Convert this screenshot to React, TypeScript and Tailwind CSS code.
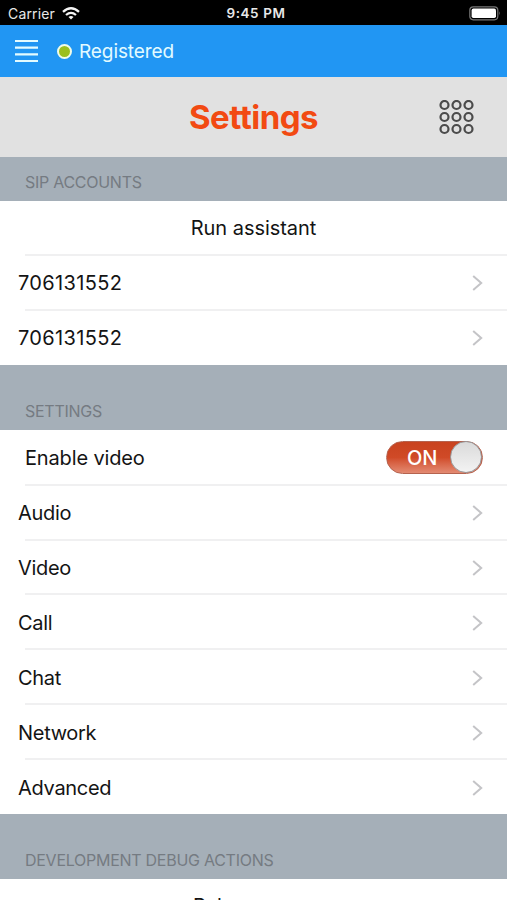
import React, { useState } from 'react';

const ACCOUNTS = ['706131552', '706131552'];
const PAGES = ['Audio', 'Video', 'Call', 'Chat', 'Network', 'Advanced'];

const Chevron: React.FC = () => (
  <svg className="w-[11px] h-4 shrink-0" viewBox="0 0 11 16" fill="none" stroke="#c4c4c7" strokeWidth="2">
    <path d="M1.2 1 L9.2 8 L1.2 15" />
  </svg>
);

const SectionTitle: React.FC<{ title: string; className?: string }> = ({ title, className = 'h-[65px]' }) => (
  <div className={`${className} shrink-0 flex items-end bg-[#a5afb8] pl-[25px] pb-[9px]`}>
    <h2 className="text-[16px] leading-5 tracking-[-0.27px] text-[#757b82]">{title}</h2>
  </div>
);

const Divider: React.FC = () => <div className="ml-[25px] h-[2px] -mt-[2px] bg-[#f0f0f1]" />;

const LinkRow: React.FC<{ label: string; className?: string; last?: boolean }> = ({ label, className = 'tracking-[-0.3px]', last }) => (
  <li>
    <button className="w-full h-[54.9px] flex items-center justify-between pl-[18px] pr-[24px] text-left">
      <span className={className}>{label}</span>
      <Chevron />
    </button>
    {!last && <Divider />}
  </li>
);

const App: React.FC = () => {
  const [video, setVideo] = useState(true);

  return (
    <div className="w-full h-[900px] overflow-hidden flex flex-col bg-white text-[#141414] font-['Inter','Liberation_Sans',sans-serif]">
      {/* Status bar */}
      <div className="h-[25px] shrink-0 grid grid-cols-3 items-center bg-black text-[#e8e8e8] text-[13px] pl-2 pr-[6px] pt-[2px]">
        <div className="flex items-center gap-[7px]">
          <span className="text-[14px] tracking-[0.15px]">Carrier</span>
          <svg className="w-[18px] h-[13px]" viewBox="0 0 18 13" fill="none" stroke="#f4f4f4" strokeWidth="2.3">
            <path d="M1 4.8 Q9 -2.2 17 4.8" />
            <path d="M4 8 Q9 3.7 14 8" />
            <path d="M6.5 10 Q9 8 11.5 10 L9 12.6 Z" fill="#f4f4f4" stroke="none" />
          </svg>
        </div>
        <span className="text-center text-[13.5px] font-semibold tracking-[0.6px] pl-[3px]">9:45 PM</span>
        <svg className="w-8 h-[15px] justify-self-end" viewBox="0 0 32 15">
          <rect x=".8" y=".8" width="28" height="13" rx="3.5" fill="none" stroke="#777" strokeWidth="1.2" />
          <rect x="2.6" y="2.6" width="24.4" height="9.4" rx="1.8" fill="#fff" />
          <path d="M30.3 5.2 Q32 7.3 30.3 9.4 Z" fill="#777" />
        </svg>
      </div>

      {/* Registration state */}
      <div className="h-[52px] shrink-0 flex items-center bg-[#2196f3] pl-[15px] text-[#e3fbff]">
        <svg className="w-[23px] h-6" viewBox="0 0 23 24" fill="none" stroke="currentColor" strokeWidth="2.2">
          <path d="M0 2 H23 M0 8.6 H23 M0 15.3 H23 M0 22 H23" />
        </svg>
        <span className="ml-[19px] w-[15px] h-[15px] rounded-full border-2 border-[#f0fbe8] bg-[#9bbf1e]" />
        <span className="ml-[7px] pt-[2px] text-[19px] tracking-[-0.1px]">Registered</span>
      </div>

      <header className="h-20 shrink-0 grid grid-cols-[1fr_auto_1fr] items-center bg-[#e1e1e1] pr-[33px]">
        <h1 className="col-start-2 ml-[33px] pt-[2px] text-[33px] tracking-[-0.5px] font-bold text-[#f24a12]">Settings</h1>
        <svg className="w-[35px] h-[35px] justify-self-end" viewBox="0 0 35 35" fill="none" stroke="#4b4b4b" strokeWidth="2.2">
          {[5.5, 17.5, 29.5].map((y) => [5.5, 17.5, 29.5].map((x) => <circle key={`${x}-${y}`} cx={x} cy={y - 0.5} r="4" />))}
        </svg>
      </header>

      <main className="text-[20px]">
        <SectionTitle title="SIP ACCOUNTS" className="h-11" />
        <ul className="h-[164px]">
          <li>
            <button className="w-full h-[54.9px] tracking-[-0.05px]">Run assistant</button>
            <Divider />
          </li>
          {ACCOUNTS.map((account, i) => (
            <LinkRow key={i} label={account} className="tracking-[0.35px]" last={i === ACCOUNTS.length - 1} />
          ))}
        </ul>

        <SectionTitle title="SETTINGS" />
        <ul className="h-[384px] pt-[0.8px]">
          <li>
            <div className="h-[54.9px] flex items-center justify-between pl-[25px] pr-6">
              <span className="tracking-[-0.15px]">Enable video</span>
              <button
                role="switch"
                aria-checked={video}
                onClick={() => setVideo(!video)}
                className={`w-[97px] h-[33px] mb-[2px] rounded-full flex items-center justify-between border border-[#b5634f] bg-linear-to-b from-[#c8431f] via-[#d04a27] to-[#e38a72] ${video ? '' : 'flex-row-reverse grayscale'}`}
              >
                <span className="pl-[20px] pt-[2px] text-[20px] font-medium text-white">{video ? 'ON' : 'OFF'}</span>
                <span className="w-8 h-8 rounded-full border-[1.5px] border-[#98989a] bg-linear-to-b from-[#dadada] to-[#f3f3f3]" />
              </button>
            </div>
            <Divider />
          </li>
          {PAGES.map((page, i) => (
            <LinkRow key={page} label={page} last={i === PAGES.length - 1} />
          ))}
        </ul>

        <SectionTitle title="DEVELOPMENT DEBUG ACTIONS" />
        <button className="w-full h-[54.9px] tracking-[-0.1px]">Release core</button>
      </main>
    </div>
  );
};

export default App;
